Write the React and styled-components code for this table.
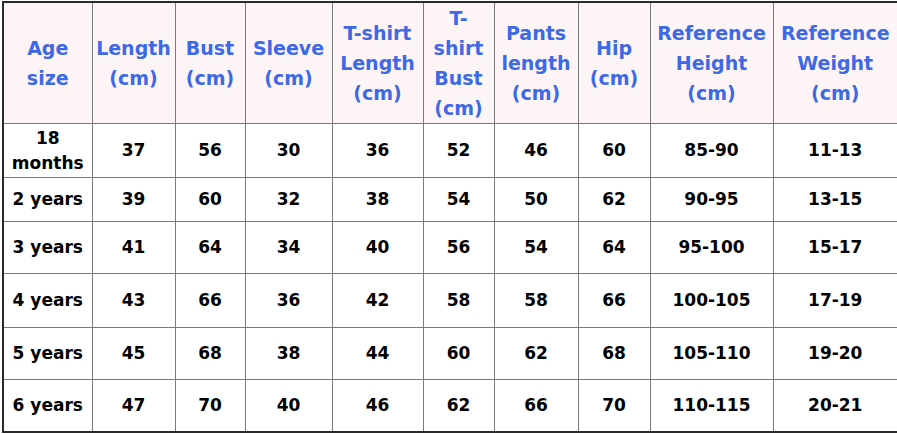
import React from "react";
import styled, { createGlobalStyle } from "styled-components";

const Global = createGlobalStyle`
  html, body { margin: 0; padding: 0; background: #ffffff; }
  body { font-family: "DejaVu Sans", Verdana, sans-serif; }
`;

const Page = styled.div`
  padding: 1px 0 0 2px;
`;

const Table = styled.table`
  border-collapse: collapse;
  table-layout: fixed;
  width: 895px;
  border: 2px solid #2b2b2b;
  font-family: "DejaVu Sans", Verdana, sans-serif;
  font-weight: bold;
`;

const HeadRow = styled.tr`
  height: 120px;
  background: #fdf5f5;
`;

const HeadCell = styled.th`
  border: 1px solid #7a7a7a;
  padding: 0 1px;
  color: #3e69e6;
  font-size: 19px;
  line-height: 30px;
  font-weight: bold;
  text-align: center;
  vertical-align: middle;
`;

const Row = styled.tr`
  height: ${(p) => p.$h}px;
`;

const Cell = styled.td`
  border: 1px solid #7a7a7a;
  padding: 0 1px;
  color: #000;
  font-size: 17px;
  line-height: 25px;
  text-align: center;
  vertical-align: middle;
`;

const widths = [89, 83, 70, 87, 91, 71, 84, 72, 123, 125];

const headers = [
  ["Age", "size"],
  ["Length", "(cm)"],
  ["Bust", "(cm)"],
  ["Sleeve", "(cm)"],
  ["T-shirt", "Length", "(cm)"],
  ["T-", "shirt", "Bust", "(cm)"],
  ["Pants", "length", "(cm)"],
  ["Hip", "(cm)"],
  ["Reference", "Height", "(cm)"],
  ["Reference", "Weight", "(cm)"],
];

const rows = [
  { h: 54, cells: [["18", "months"], "37", "56", "30", "36", "52", "46", "60", "85-90", "11-13"] },
  { h: 44, cells: ["2 years", "39", "60", "32", "38", "54", "50", "62", "90-95", "13-15"] },
  { h: 52, cells: ["3 years", "41", "64", "34", "40", "56", "54", "64", "95-100", "15-17"] },
  { h: 54, cells: ["4 years", "43", "66", "36", "42", "58", "58", "66", "100-105", "17-19"] },
  { h: 52, cells: ["5 years", "45", "68", "38", "44", "60", "62", "68", "105-110", "19-20"] },
  { h: 52, cells: ["6 years", "47", "70", "40", "46", "62", "66", "70", "110-115", "20-21"] },
];

const Lines = ({ lines }) =>
  lines.map((l, i) => (
    <React.Fragment key={i}>
      {i > 0 && <br />}
      {l}
    </React.Fragment>
  ));

export default function App() {
  return (
    <Page>
      <Global />
      <Table>
        <colgroup>
          {widths.map((w, i) => (
            <col key={i} style={{ width: w }} />
          ))}
        </colgroup>
        <thead>
          <HeadRow>
            {headers.map((h, i) => (
              <HeadCell key={i}>
                <Lines lines={h} />
              </HeadCell>
            ))}
          </HeadRow>
        </thead>
        <tbody>
          {rows.map((r, ri) => (
            <Row key={ri} $h={r.h}>
              {r.cells.map((c, ci) => (
                <Cell key={ci}>
                  {Array.isArray(c) ? <Lines lines={c} /> : c}
                </Cell>
              ))}
            </Row>
          ))}
        </tbody>
      </Table>
    </Page>
  );
}
